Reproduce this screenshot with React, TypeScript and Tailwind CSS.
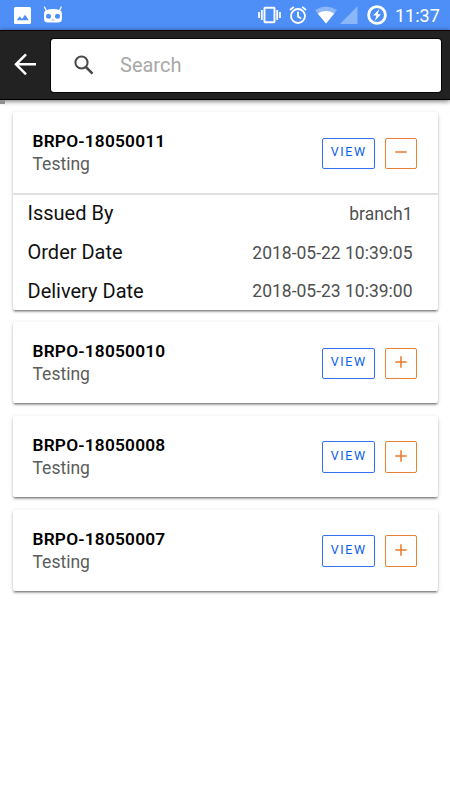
type OrderProps = { id: string; open?: boolean };

const details = [
  ["Issued By", "branch1"],
  ["Order Date", "2018-05-22 10:39:05"],
  ["Delivery Date", "2018-05-23 10:39:00"],
];

function StatusBar() {
  return (
    <div className="flex h-[30px] w-full items-center bg-[#4e8ff7] text-white">
      <svg className="ml-[14px] h-[17px] w-[17px] shrink-0" viewBox="0 0 17 17">
        <rect width="17" height="17" rx="1.5" fill="white" />
        <path d="M2.7 13.3 5.8 9.2l2.2 2.7 3.1-4.1 3.7 5.5z" fill="#4e8ff7" />
      </svg>
      <svg className="ml-[12px] h-[18px] w-[20px] shrink-0" viewBox="0 0 20 18">
        <path d="M1.5 1 3 4M18.2 1 16.8 4" stroke="white" strokeWidth="1.3" strokeLinecap="round" />
        <path d="M3 4.2Q10 1.8 17 4.2Q19 5 18.9 8v5Q18.8 16.5 15 16.5H5Q1.1 16.5 1 13V8Q1 5 3 4.2Z" fill="white" />
        <circle cx="5.5" cy="10.3" r="2.5" fill="#4e8ff7" />
        <circle cx="14.5" cy="10.3" r="2.5" fill="#4e8ff7" />
        <path d="M8.8 14h2.4" stroke="#4e8ff7" strokeWidth=".8" />
      </svg>
      <div className="ml-auto flex items-center">
        <svg className="h-[18px] w-[23px]" viewBox="0 0 23 18" fill="none" stroke="white">
          <rect x="6.5" y="1.7" width="10" height="14.6" strokeWidth="1.9" rx=".5" />
          <path d="M3.8 4v10M19.2 4v10" strokeWidth="1.8" />
          <path d="M1 6v6M22 6v6" strokeWidth="1.7" />
        </svg>
        <svg className="ml-[8px] h-[18px] w-[18px]" viewBox="0 0 18 18" fill="none" stroke="white" strokeWidth="1.8">
          <circle cx="9" cy="10" r="7" />
          <path d="M1 4 4.8.9M17 4 13.2.9M9 5.8v4.7l3 1.9" />
        </svg>
        <svg className="ml-[8px] h-[18px] w-[22px]" viewBox="0 0 22 18">
          <path d="M0 4Q11-3.2 22 4L11 17.6Z" fill="white" opacity=".35" />
          <path d="M2.7 7.4Q11 2.6 19.3 7.4L11 17.6Z" fill="white" />
        </svg>
        <svg className="ml-[3px] h-[18px] w-[18px]" viewBox="0 0 18 18">
          <path d="M0 18H17.5V.3Z" fill="white" opacity=".35" />
        </svg>
        <svg className="ml-[9px] h-[20px] w-[20px]" viewBox="0 0 20 20">
          <circle cx="10" cy="10" r="8.4" fill="none" stroke="white" strokeWidth="2.8" />
          <path d="m12.3 4-6.1 6.6h3.2L7.8 16l6.1-6.8h-3.2Z" fill="white" />
        </svg>
        <span className="mr-[10px] ml-[8px] w-[45px] pt-px text-[18px] leading-[20px] whitespace-nowrap">11:37</span>
      </div>
    </div>
  );
}

function Header() {
  return (
    <header className="flex h-[70px] border-t border-b border-t-[#150000] border-b-black bg-[#222222] shadow-[0_1px_5px_rgba(0,0,0,0.6)]">
      <svg className="mt-[22px] ml-[14px] h-[22px] w-[23px] shrink-0" viewBox="0 0 23 22" fill="none" stroke="white" strokeWidth="2.5">
        <path d="M22 11.3H2M12 1.3 2 11.3l10 10" />
      </svg>
      <div className="mt-[7.5px] ml-[14px] flex h-[53px] w-[390px] items-center rounded-[3px] bg-white shadow-[0_0_0_1px_#050505]">
        <svg className="ml-[23px] h-[20px] w-[20px]" viewBox="0 0 20 20" fill="none" stroke="#484848" strokeWidth="2">
          <circle cx="7.5" cy="7.5" r="6.1" />
          <path d="m11.9 12 6.6 6.6" strokeWidth="2.5" />
        </svg>
        <input className="ml-[26px] h-[30px] w-[270px] bg-transparent pb-[1px] text-[20px] font-normal text-black outline-none placeholder:text-[#a8a8a8]" placeholder="Search" aria-label="Search" />
      </div>
    </header>
  );
}

function Order({ id, open = false }: OrderProps) {
  return (
    <article className="rounded-[2px] bg-white shadow-[0_2px_2px_rgba(0,0,0,0.26),0_3px_1px_-2px_rgba(0,0,0,0.2),0_1px_5px_rgba(0,0,0,0.12)]">
      <div className="flex h-[81.25px] items-start pr-[20.5px] pl-[20px]">
        <div className="pt-[18px]">
          <h2 className="text-[17.3px] leading-[23px] font-semibold tracking-[0.2px] text-black">{id}</h2>
          <p className="text-[17.5px] leading-[22px] text-[#5c5c5c]">Testing</p>
        </div>
        <button className="mt-[25.5px] ml-auto h-[31.5px] w-[52.5px] rounded-[2px] border border-[#3272f0] pb-[1.5px] pl-[1px] text-[12.5px] font-normal tracking-[1.6px] text-[#0b5eea]">VIEW</button>
        <button aria-label={open ? "Collapse" : "Expand"} className="mt-[25.5px] ml-[10px] flex h-[31.5px] w-[32.5px] justify-center rounded-[2px] border border-[#e78135] pt-[7.5px]">
          <svg className="h-[12px] w-[12px]" viewBox="0 0 12 12" stroke="#e9792b" strokeWidth="1.5">
            <path d={open ? "M.3 6h11.4" : "M.3 6h11.4M6 .3v11.4"} />
          </svg>
        </button>
      </div>
      {open && (
        <dl className="flex h-[116.25px] flex-col border-t-2 border-[#e0e0e0] pr-[25px] pl-[15px]">
          {details.map(([label, value]) => (
            <div key={label} className="flex h-[38.75px] shrink-0 items-center justify-between pb-[2.5px]">
              <dt className="text-[20px] text-[#111111]">{label}</dt>
              <dd className="pt-[1px] text-[17.5px] text-[#505050]">{value}</dd>
            </div>
          ))}
        </dl>
      )}
    </article>
  );
}

export default function App() {
  return (
    <div className="h-[800px] w-[450px] overflow-hidden bg-white font-['Roboto',sans-serif]">
      <StatusBar />
      <Header />
      <div className="h-[3.5px] w-[5px] bg-[#909090]" />
      <main className="flex flex-col gap-[12.5px] px-[12.5px] pt-[8.5px]">
        <Order id="BRPO-18050011" open />
        <Order id="BRPO-18050010" />
        <Order id="BRPO-18050008" />
        <Order id="BRPO-18050007" />
      </main>
    </div>
  );
}
